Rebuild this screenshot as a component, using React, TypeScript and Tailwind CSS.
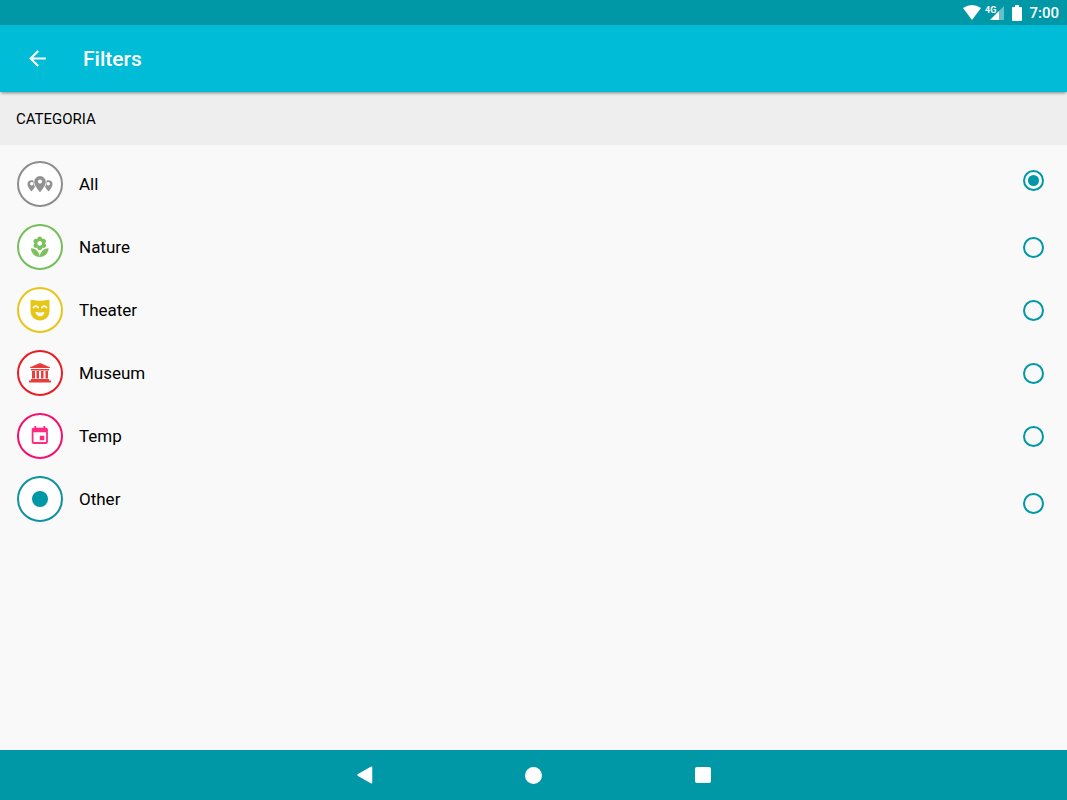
import { useState } from "react";

const icons = {
  all: (
    <g fill="#919191">
      <path d="M5.500 10.200a4 4 0 0 0-4 4c0 3.100 4 7.300 4 7.300s4-4.200 4-7.300a4 4 0 0 0-4-4zM22.500 10.200a4 4 0 0 0-4 4c0 3.100 4 7.300 4 7.300s4-4.200 4-7.300a4 4 0 0 0-4-4z" />
      <circle cx="5.700" cy="13.800" r="1.700" fill="#fff" />
      <circle cx="22.300" cy="13.800" r="1.700" fill="#fff" />
      <path stroke="#fff" strokeWidth="1.600" paintOrder="stroke" d="M14 6a5.800 5.800 0 0 0-5.800 5.800C8.200 16 14 22.300 14 22.300s5.800-6.300 5.800-10.500A5.800 5.800 0 0 0 14 6z" />
      <circle cx="14" cy="11.600" r="2.100" fill="#fff" />
    </g>
  ),
  nature: (
    <g transform="translate(2 2.500) scale(.98)">
      <path fill="#7cc15e" d="M12 22c4.970 0 9-4.030 9-9-4.970 0-9 4.030-9 9zM5.600 10.250c0 1.380 1.120 2.500 2.500 2.500.530 0 1.010-.160 1.420-.440l-.020.190c0 1.380 1.120 2.500 2.500 2.500s2.500-1.120 2.500-2.500l-.020-.190c.400.280.890.440 1.420.440 1.380 0 2.500-1.120 2.500-2.500 0-1-.590-1.850-1.430-2.250.840-.400 1.430-1.250 1.430-2.250 0-1.380-1.120-2.500-2.500-2.500-.530 0-1.010.160-1.420.440l.020-.190C14.500 2.120 13.380 1 12 1S9.500 2.120 9.500 3.500l.020.190c-.400-.280-.890-.440-1.420-.440-1.380 0-2.500 1.120-2.500 2.500 0 1 .590 1.850 1.430 2.250-.840.400-1.430 1.250-1.430 2.250zM12 5.500c1.380 0 2.500 1.120 2.500 2.500s-1.120 2.500-2.500 2.500S9.500 9.380 9.500 8s1.120-2.500 2.500-2.500zM3 13c0 4.970 4.030 9 9 9 0-4.970-4.030-9-9-9z" />
    </g>
  ),
  theater: (
    <g>
      <path fill="#e6c619" d="M5.500 3.700q8.500 2 17 0 1 0 1 1V15c0 5.800-4.500 9.500-9.500 9.500S4.500 20.800 4.500 15V4.700q0-1 1-1z" />
      <g fill="none" stroke="#fff" strokeWidth="1.700" strokeLinecap="round">
        <path d="M7.500 11.500q2.300-2.700 4.700 0M15.800 11.500q2.300-2.700 4.700 0" />
        <path fill="#fff" strokeWidth="1" d="M10 16.500q4 1.500 8 0-1 3.500-4 3.500t-4-3.500z" />
      </g>
    </g>
  ),
  museum: (
    <g fill="#e83d3d">
      <path d="M14 4 24 8.300V9H4v-.7zM5 10h18v1.500H5zM6 12h3v7.500H6zM10.500 12H13v7.500h-2.500zM15 12h2.500v7.500H15zM19.500 12h2.500v7.500h-2.500zM5 20h18v1.500H5zM3 21.500h22v2H3z" />
    </g>
  ),
  temp: (
    <g transform="translate(3 3) scale(.9)">
      <path fill="#ff2b82" d="M17 12h-5v5h5v-5zM16 1v2H8V1H6v2H5c-1.110 0-1.990.9-1.990 2L3 19c0 1.100.89 2 2 2h14c1.100 0 2-.9 2-2V5c0-1.100-.9-2-2-2h-1V1h-2zm3 18H5V8h14v11z" />
    </g>
  ),
  other: <circle cx="14" cy="14" r="8" fill="#0097a7" />,
};

const categories: { name: string; icon: keyof typeof icons; ring: string; radio: string }[] = [
  { name: "All", icon: "all", ring: "border-[#8d8d8d]", radio: "pb-2" },
  { name: "Nature", icon: "nature", ring: "border-[#76bd5b]", radio: "" },
  { name: "Theater", icon: "theater", ring: "border-[#e6c619]", radio: "" },
  { name: "Museum", icon: "museum", ring: "border-[#e71d24]", radio: "" },
  { name: "Temp", icon: "temp", ring: "border-[#f5106f]", radio: "" },
  { name: "Other", icon: "other", ring: "border-[#0e91a0]", radio: "pt-2" },
];

function StatusBar() {
  return (
    <div className="flex h-[25px] shrink-0 items-center justify-end bg-[#0097a7] pr-2 text-white">
      <svg width="18" height="15" viewBox="0 0 18 15" aria-hidden="true">
        <path fill="#fff" d="M0 3Q9-3 18 3L9 15z" />
      </svg>
      <svg className="ml-1" width="20" height="16" viewBox="0 0 20 16" aria-hidden="true">
        <path fill="#fff" fillOpacity=".4" d="M19 1v14H5z" />
        <path fill="#fff" d="M14 6v9H5z" />
        <path fill="#0097a7" d="M0 0h11v8H0z" />
        <text x="0" y="8" fill="#fff" fontSize="9" fontWeight="700" fontFamily="Roboto, sans-serif">4G</text>
      </svg>
      <svg className="ml-[7px]" width="10" height="16" viewBox="0 0 10 16" aria-hidden="true">
        <path fill="#fff" d="M3 0h4v2h2q1 0 1 1v12q0 1-1 1H1q-1 0-1-1V3q0-1 1-1h2z" />
      </svg>
      <span className="ml-[7px] text-[15px] font-medium leading-4">7:00</span>
    </div>
  );
}

function NavigationBar() {
  return (
    <nav className="flex h-[50px] shrink-0 items-center justify-center gap-[145px] bg-[#0097a7]">
      <button aria-label="Back" className="flex size-6 items-center justify-center">
        <svg width="18" height="18" viewBox="0 0 18 18">
          <path d="M2 9 15.500 1.200v15.600z" fill="#fff" stroke="#fff" strokeWidth="1.500" strokeLinejoin="round" />
        </svg>
      </button>
      <button aria-label="Home" className="flex size-6 items-center justify-center">
        <span className="size-[17px] rounded-full bg-white" />
      </button>
      <button aria-label="Recent apps" className="flex size-6 items-center justify-center">
        <span className="size-4 rounded-[2px] bg-white" />
      </button>
    </nav>
  );
}

export default function App() {
  const [selected, setSelected] = useState("All");

  return (
    <div className="flex min-h-screen flex-col bg-[#f9f9f9] font-[Roboto,sans-serif] text-black">
      <StatusBar />
      <header className="relative flex h-[67px] shrink-0 items-center bg-[#00bcd7] pl-[25px] text-white shadow-[0_2px_3px_-1px_rgba(0,0,0,0.45)]">
        <button aria-label="Navigate up" className="flex size-[25px] items-center justify-center">
          <svg width="25" height="25" viewBox="0 0 24 24" fill="#fff">
            <path d="M20 11H7.830l5.590-5.590L12 4l-8 8 8 8 1.410-1.410L7.830 13H20v-2z" />
          </svg>
        </button>
        <h1 className="ml-[33px] text-[21px] font-medium leading-6">Filters</h1>
      </header>
      <main className="flex-1">
        <h2 id="category-heading" className="flex h-[53px] items-center bg-[#eeeeee] pl-4 text-[15px] leading-5">
          CATEGORIA
        </h2>
        <div role="radiogroup" aria-labelledby="category-heading" className="flex flex-col gap-[17px] pt-4 pr-[23px] pl-[17px]">
          {categories.map((category) => (
            <label key={category.name} className="flex h-[46px] items-center">
              <span className={`flex size-[46px] items-center justify-center rounded-full border-2 bg-white ${category.ring}`}>
                <svg width="28" height="28" viewBox="0 0 28 28" aria-hidden="true">
                  {icons[category.icon]}
                </svg>
              </span>
              <span className="ml-4 flex-1 text-[17px] leading-6">{category.name}</span>
              <span className={`flex ${category.radio}`}>
                <input
                  type="radio"
                  name="category"
                  value={category.name}
                  checked={selected === category.name}
                  onChange={() => setSelected(category.name)}
                  className="size-[21px] appearance-none rounded-full border-2 border-[#0097a7] bg-clip-content p-[3px] checked:bg-[#0097a7]"
                />
              </span>
            </label>
          ))}
        </div>
      </main>
      <NavigationBar />
    </div>
  );
}
